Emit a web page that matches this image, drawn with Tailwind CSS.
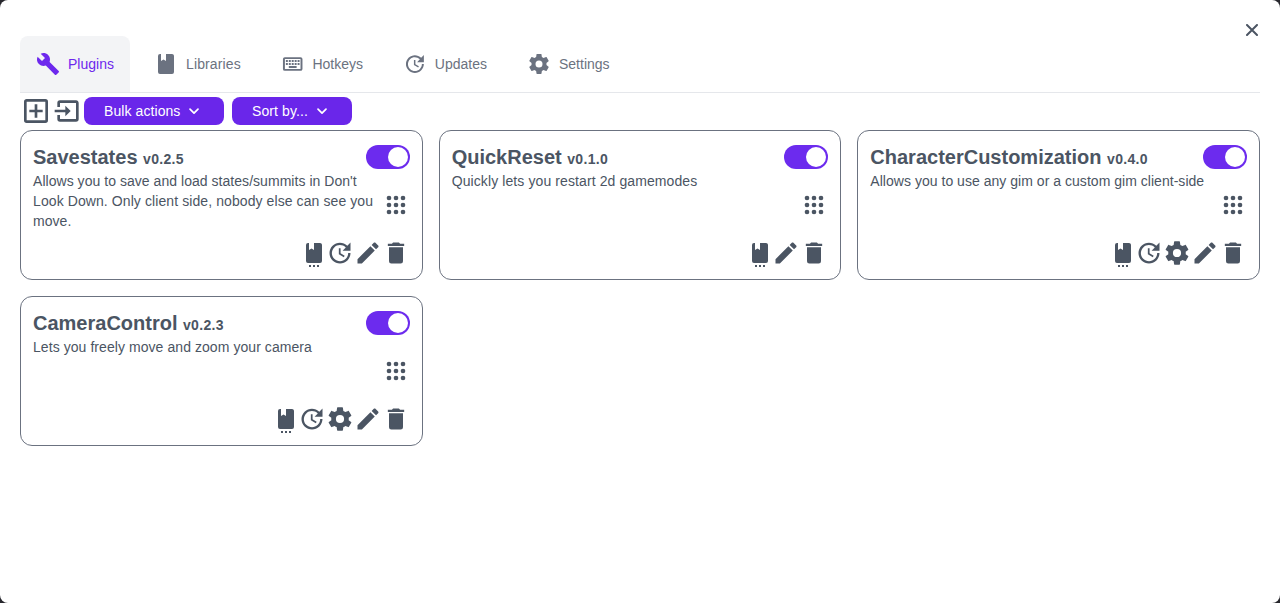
<!DOCTYPE html>
<html lang="en">
<head>
<meta charset="utf-8">
<title>Plugins</title>
<script src="https://cdn.jsdelivr.net/npm/@tailwindcss/browser@4"></script>
</head>
<body class="bg-[#27272d] font-['Liberation_Sans',Arial,sans-serif] text-sm text-[#4b5563]">
<svg class="hidden">
  <symbol id="wrench" viewBox="0 0 24 24"><path d="M22.7,19L13.6,9.9C14.5,7.6 14,4.9 12.1,3C10.1,1 7.1,0.6 4.7,1.7L9,6L6,9L1.6,4.7C0.4,7.1 0.9,10.1 2.9,12.1C4.8,14 7.5,14.5 9.8,13.6L18.9,22.7C19.3,23.1 19.9,23.1 20.3,22.7L22.6,20.4C23.1,20 23.1,19.3 22.7,19Z"/></symbol>
  <symbol id="book" viewBox="0 0 24 24"><path d="M18,22A2,2 0 0,0 20,20V4C20,2.89 19.1,2 18,2H12V9L9.5,7.5L7,9V2H6A2,2 0 0,0 4,4V20A2,2 0 0,0 6,22H18Z"/></symbol>
  <symbol id="keyboard" viewBox="0 0 24 24"><path d="M4,5A2,2 0 0,0 2,7V17A2,2 0 0,0 4,19H20A2,2 0 0,0 22,17V7A2,2 0 0,0 20,5H4M4,7H20V17H4V7M5,8V10H7V8H5M8,8V10H10V8H8M11,8V10H13V8H11M14,8V10H16V8H14M17,8V10H19V8H17M5,11V13H7V11H5M8,11V13H10V11H8M11,11V13H13V11H11M14,11V13H16V11H14M17,11V13H19V11H17M8,14V16H16V14H8Z"/></symbol>
  <symbol id="update" viewBox="0 0 24 24"><path d="M21,10.12H14.22L16.96,7.3C14.23,4.6 9.81,4.5 7.08,7.2C4.35,9.91 4.35,14.28 7.08,17C9.81,19.7 14.23,19.7 16.96,17C18.32,15.65 19,14.08 19,12.1H21C21,14.08 20.12,16.65 18.36,18.39C14.85,21.87 9.15,21.87 5.64,18.39C2.14,14.92 2.11,9.28 5.62,5.81C9.13,2.34 14.76,2.34 18.27,5.81L21,3V10.12M12.5,8V12.25L16,14.33L15.28,15.54L11,13V8H12.5Z"/></symbol>
  <symbol id="cog" viewBox="0 0 24 24"><path d="M12,15.5A3.5,3.5 0 0,1 8.5,12A3.5,3.5 0 0,1 12,8.5A3.5,3.5 0 0,1 15.5,12A3.5,3.5 0 0,1 12,15.5M19.43,12.97C19.47,12.65 19.5,12.33 19.5,12C19.5,11.67 19.47,11.34 19.43,11L21.54,9.37C21.73,9.22 21.78,8.95 21.66,8.73L19.66,5.27C19.54,5.05 19.27,4.96 19.05,5.05L16.56,6.05C16.04,5.66 15.5,5.32 14.87,5.07L14.5,2.42C14.46,2.18 14.25,2 14,2H10C9.75,2 9.54,2.18 9.5,2.42L9.13,5.07C8.5,5.32 7.96,5.66 7.44,6.05L4.95,5.05C4.73,4.96 4.46,5.05 4.34,5.27L2.34,8.73C2.21,8.95 2.27,9.22 2.46,9.37L4.57,11C4.53,11.34 4.5,11.67 4.5,12C4.5,12.33 4.53,12.65 4.57,12.97L2.46,14.63C2.27,14.78 2.21,15.05 2.34,15.27L4.34,18.73C4.46,18.95 4.73,19.03 4.95,18.95L7.44,17.94C7.96,18.34 8.5,18.68 9.13,18.93L9.5,21.58C9.54,21.82 9.75,22 10,22H14C14.25,22 14.46,21.82 14.5,21.58L14.87,18.93C15.5,18.67 16.04,18.34 16.56,17.94L19.05,18.95C19.27,19.03 19.54,18.95 19.66,18.73L21.66,15.27C21.78,15.05 21.73,14.78 21.54,14.63L19.43,12.97Z"/></symbol>
  <symbol id="pencil" viewBox="0 0 24 24"><path d="M20.71,7.04C21.1,6.65 21.1,6 20.71,5.63L18.37,3.29C18,2.9 17.35,2.9 16.96,3.29L15.12,5.12L18.87,8.87M3,17.25V21H6.75L17.81,9.93L14.06,6.18L3,17.25Z"/></symbol>
  <symbol id="trash" viewBox="0 0 24 24"><path d="M19,4H15.5L14.5,3H9.5L8.5,4H5V6H19M6,19A2,2 0 0,0 8,21H16A2,2 0 0,0 18,19V7H6V19Z"/></symbol>
  <symbol id="plus" viewBox="0 0 24 24"><path d="M19,19V5H5V19H19M19,3A2,2 0 0,1 21,5V19A2,2 0 0,1 19,21H5A2,2 0 0,1 3,19V5C3,3.89 3.9,3 5,3H19M11,7H13V11H17V13H13V17H11V13H7V11H11V7Z"/></symbol>
  <symbol id="import" viewBox="0 0 24 24"><path d="M14,12L10,8V11H2V13H10V16M20,18V6C20,4.89 19.1,4 18,4H6A2,2 0 0,0 4,6V9H6V6H18V18H6V15H4V18A2,2 0 0,0 6,20H18A2,2 0 0,0 20,18Z"/></symbol>
  <symbol id="grid" viewBox="0 0 24 24"><circle cx="6" cy="6" r="2"/><circle cx="12" cy="6" r="2"/><circle cx="18" cy="6" r="2"/><circle cx="6" cy="12" r="2"/><circle cx="12" cy="12" r="2"/><circle cx="18" cy="12" r="2"/><circle cx="6" cy="18" r="2"/><circle cx="12" cy="18" r="2"/><circle cx="18" cy="18" r="2"/></symbol>
  <symbol id="bookdots" viewBox="0 0 24 28"><path d="M18,22A2,2 0 0,0 20,20V4C20,2.89 19.1,2 18,2H12V9L9.5,7.5L7,9V2H6A2,2 0 0,0 4,4V20A2,2 0 0,0 6,22H18ZM7,24H9V26H7ZM11,24H13V26H11ZM15,24H17V26H15Z"/></symbol>
  <symbol id="chevron" viewBox="0 0 12 12"><path d="M2 4.2 6 8.2 10 4.2" fill="none" stroke="currentColor" stroke-width="1.7" stroke-linecap="round" stroke-linejoin="round"/></symbol>
</svg>
<div class="relative flex h-[603px] flex-col rounded-lg bg-white px-5 pt-9">
  <button class="absolute top-6 right-[22px]" aria-label="Close">
    <svg class="size-3" viewBox="0 0 12 12"><path d="M1 1 11 11M11 1 1 11" fill="none" stroke="currentColor" stroke-width="2" stroke-linecap="round"/></svg>
  </button>
  <nav class="flex h-[57px] gap-2 border-b border-[#e5e7eb] text-[#6b7280]">
    <a class="flex w-[110px] items-center gap-2 rounded-t-lg bg-[#f3f4f6] px-4 text-[#6d28ed]"><svg class="size-6 fill-current"><use href="#wrench"/></svg>Plugins</a>
    <a class="flex w-[119px] items-center gap-2 px-4 tracking-[0.13px]"><svg class="size-6 fill-current"><use href="#book"/></svg>Libraries</a>
    <a class="flex w-[114px] items-center gap-2 px-4"><svg class="size-6 fill-current"><use href="#keyboard"/></svg>Hotkeys</a>
    <a class="flex w-[116px] items-center gap-2 px-4"><svg class="size-6 fill-current"><use href="#update"/></svg>Updates</a>
    <a class="flex items-center gap-2 px-4"><svg class="size-6 fill-current"><use href="#cog"/></svg>Settings</a>
  </nav>
  <div class="flex h-[37px] items-center pb-px">
    <svg class="size-8 fill-current"><use href="#plus"/></svg>
    <svg class="size-8 fill-current"><use href="#import"/></svg>
    <button class="flex h-7 w-[140px] items-center gap-2 rounded-lg bg-[#6a26ea] pl-5 tracking-[0.08px] text-white">Bulk actions<svg class="size-3"><use href="#chevron"/></svg></button>
    <button class="ml-2 flex h-7 w-[120px] items-center gap-2 rounded-lg bg-[#6a26ea] pl-5 tracking-[0.1px] text-white">Sort by...<svg class="size-3"><use href="#chevron"/></svg></button>
  </div>
  <main id="cards" class="grid grid-cols-3 gap-4"></main>
</div>
<script>
const icon = (name, cls) => `<svg class="${cls} fill-current"><use href="#${name}"/></svg>`;
const plugins = [
  ["Savestates", "v0.2.5", "Allows you to save and load states/summits in Don't <span class='tracking-[0.09px]'>Look Down. Only client side, nobody else can see you</span> move.", ["update", "pencil", "trash"], "tracking-[0.04px]"],
  ["QuickReset", "v0.1.0", "Quickly lets you restart 2d gamemodes", ["pencil", "trash"], "tracking-[0.1px]"],
  ["CharacterCustomization", "v0.4.0", "Allows you to use any gim or a custom gim client-side", ["update", "cog", "pencil", "trash"], "tracking-[0.03px]"],
  ["CameraControl", "v0.2.3", "Lets you freely move and zoom your camera", ["update", "cog", "pencil", "trash"], "tracking-[0.065px]"],
];
document.getElementById("cards").innerHTML = plugins.map(([name, version, text, actions, tracking]) => `
  <section class="flex h-[150px] flex-col rounded-xl border border-[#6b7280] p-3">
    <div class="flex h-7 items-center justify-between">
      <h2 class="text-xl font-bold">${name} <span class="text-sm tracking-[0.3px]">${version}</span></h2>
      <div class="flex h-6 w-11 items-center justify-end rounded-full bg-[#6c2bee] pr-0.5"><div class="size-5 rounded-full bg-white"></div></div>
    </div>
    <div class="flex flex-1 justify-between">
      <p class="flex-1 leading-5 ${tracking}">${text}</p>
      ${icon("grid", "mt-5 size-7 shrink-0")}
    </div>
    <div class="flex h-7 justify-end">${icon("bookdots", "h-7 w-6 pt-0.5 box-content -mb-0.5")}${actions.map(a => icon(a, "size-7")).join("")}</div>
  </section>`).join("");
</script>
</body>
</html>
